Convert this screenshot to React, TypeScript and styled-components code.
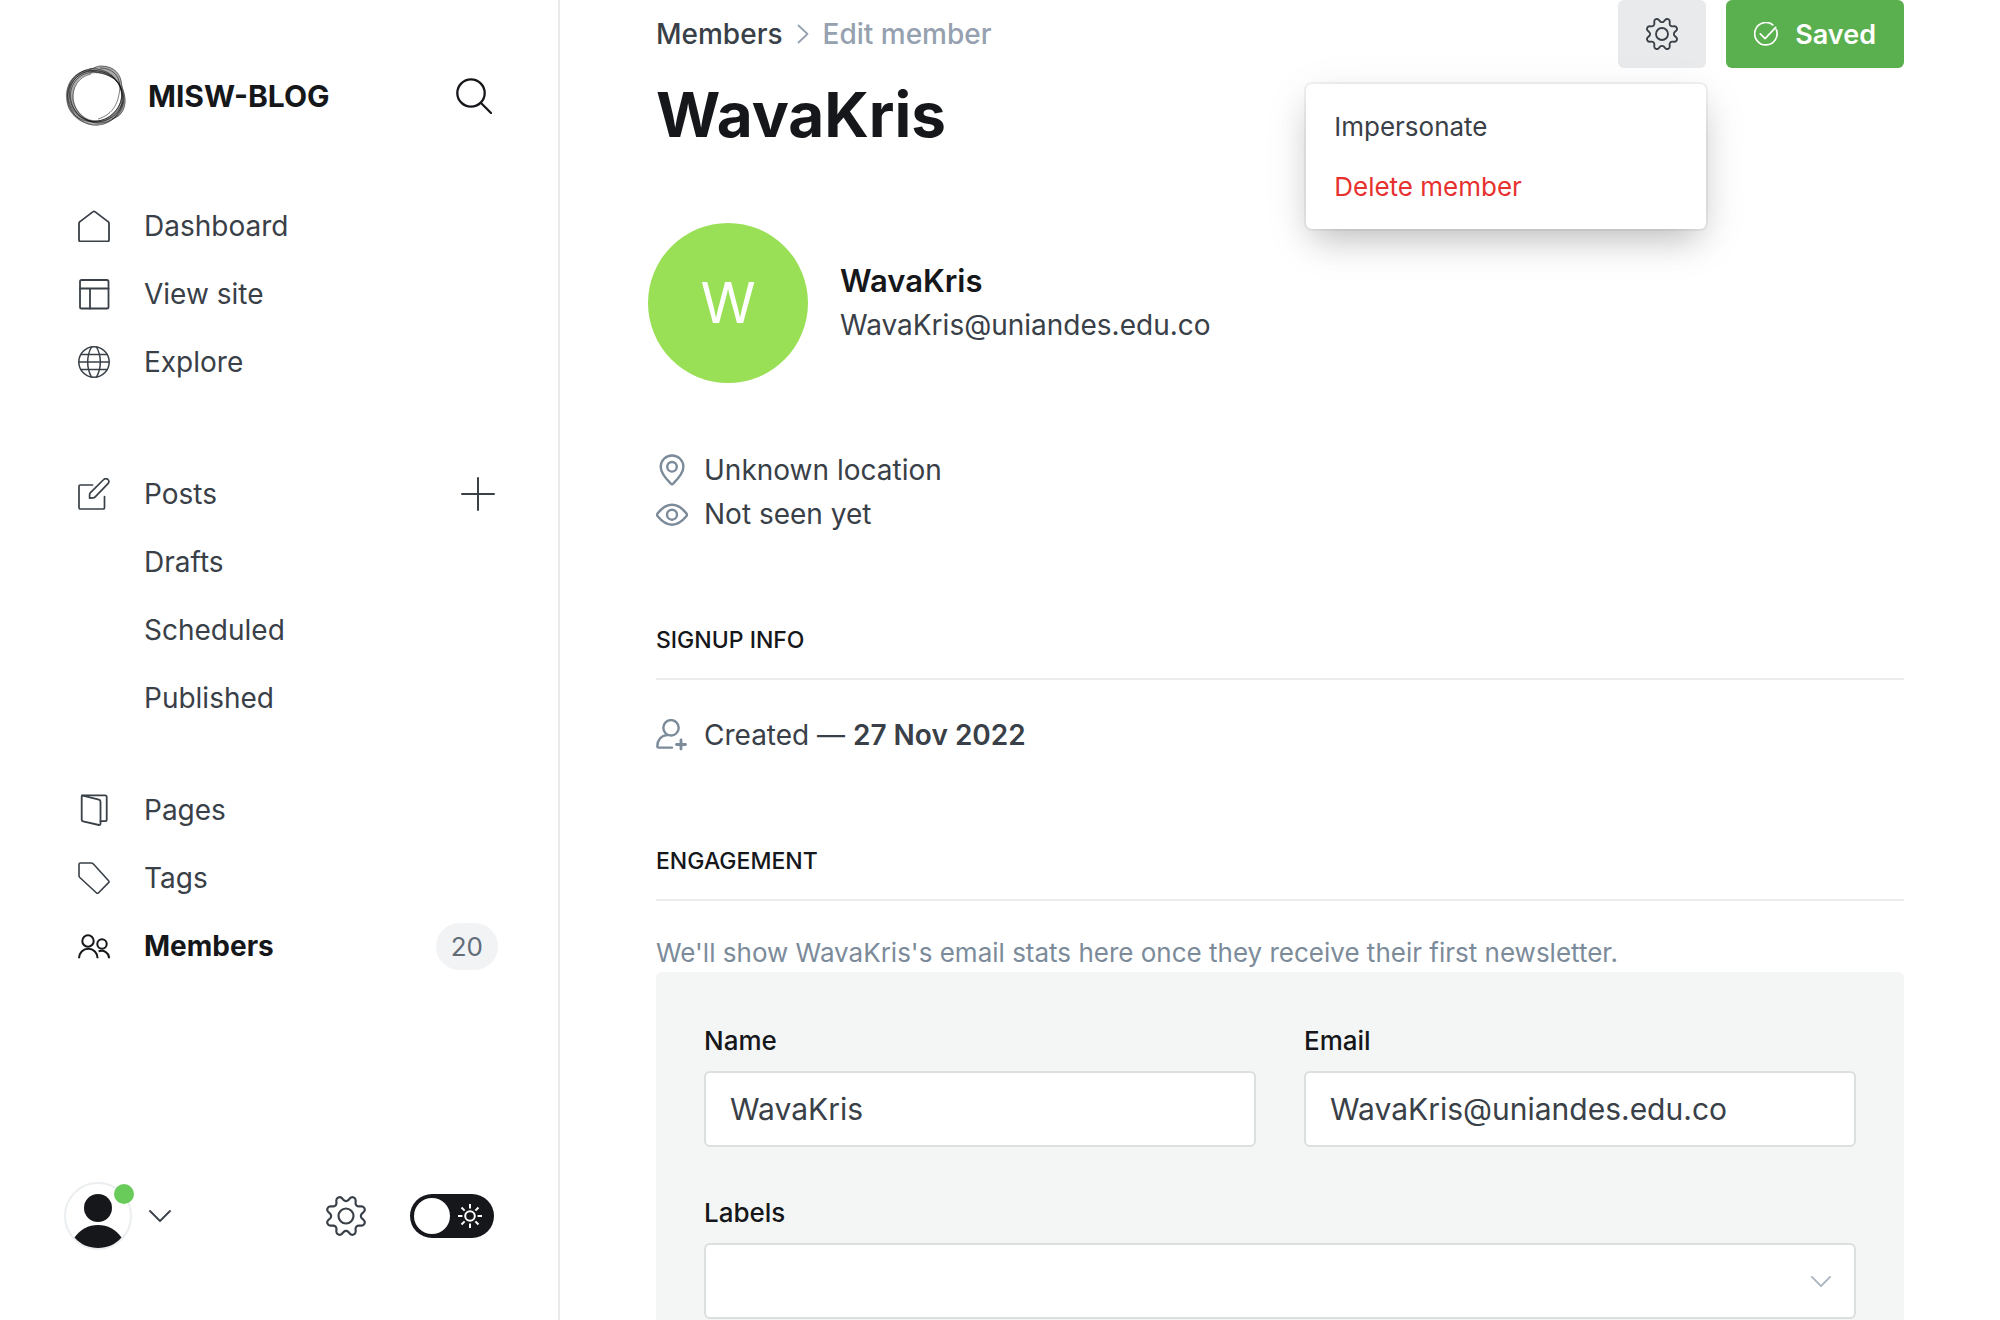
import React from 'react';
import styled, { createGlobalStyle } from 'styled-components';

const color = {
  ink: '#15171a',
  text: '#394047',
  muted: '#7c8b9a',
  faint: '#95a1af',
  line: '#ebecec',
  green: '#5aaf4e',
  red: '#e6312f',
};

const GlobalStyle = createGlobalStyle`
  *, *::before, *::after { box-sizing: border-box; }
  body {
    margin: 0;
    background: #fff;
    color: ${color.text};
    font-family: Inter, "Liberation Sans", sans-serif;
    font-size: 28px;
    -webkit-font-smoothing: antialiased;
  }
  button, input, select { font: inherit; color: inherit; }
  svg { display: block; flex: none; }
`;

const Layout = styled.div`
  display: flex;
  height: 100vh;
`;

/* ---------- Sidebar ---------- */

const Sidebar = styled.nav`
  display: flex;
  flex-direction: column;
  flex: none;
  width: 560px;
  padding: 64px 60px 64px 64px;
  border-right: 2px solid #e8e9ea;
`;

const SiteHeader = styled.header`
  display: flex;
  align-items: center;
  gap: 20px;
  height: 64px;
  margin-bottom: 64px;
  padding-right: 6px;
`;

const SiteName = styled.span`
  flex: 1;
  color: ${color.ink};
  font-size: 30px;
  font-weight: 700;
`;

const IconButton = styled.button`
  display: flex;
  align-items: center;
  justify-content: center;
  padding: 0;
  border: 0;
  background: none;
  color: ${(p) => p.color || color.text};
  cursor: pointer;
`;

const NavGroup = styled.ul<{ $space?: number }>`
  margin: 0 0 ${(p) => p.$space || 0}px;
  padding: 0;
  list-style: none;
`;

const NavItem = styled.li`
  display: flex;
  align-items: center;
  justify-content: space-between;
  height: 68px;
`;

const NavLink = styled.a<{ $active?: boolean; $nested?: boolean }>`
  display: flex;
  align-items: center;
  gap: 34px;
  padding-left: ${(p) => (p.$nested ? 80 : 14)}px;
  color: ${(p) => (p.$active ? color.ink : color.text)};
  font-weight: ${(p) => (p.$active ? 700 : 400)};
  line-height: 36px;
  text-decoration: none;
`;

const AddButton = styled(IconButton)`
  margin-right: 3px;
`;

const Badge = styled.span`
  padding: 0 15px;
  border-radius: 24px;
  background: #f1f3f4;
  color: #626d79;
  font-size: 26px;
  line-height: 47px;
`;

const SidebarFooter = styled.footer`
  display: flex;
  align-items: center;
  justify-content: space-between;
  margin-top: auto;
  padding: 0 4px 6px 0;
`;

const FooterTools = styled.div`
  display: flex;
  align-items: center;
  gap: 44px;
`;

const UserButton = styled(IconButton)`
  gap: 17px;
`;

const UserAvatar = styled.span`
  position: relative;
  display: flex;
  width: 68px;
  height: 68px;
`;

const StatusDot = styled.span`
  position: absolute;
  top: 2px;
  right: -2px;
  width: 20px;
  height: 20px;
  border-radius: 50%;
  background: #69cc5a;
`;

const ThemeSwitch = styled.label`
  position: relative;
  display: flex;
  cursor: pointer;

  svg {
    position: absolute;
    top: 10px;
    right: 12px;
    color: #fff;
  }
`;

const SwitchInput = styled.input`
  appearance: none;
  display: flex;
  align-items: center;
  width: 84px;
  height: 44px;
  margin: 0;
  padding: 0 4px;
  border-radius: 22px;
  background: ${color.ink};
  cursor: pointer;

  &::before {
    content: '';
    width: 36px;
    height: 36px;
    border-radius: 50%;
    background: #fff;
  }
`;

/* ---------- Main ---------- */

const Main = styled.main`
  flex: 1;
  min-width: 0;
  padding: 0 96px 96px;
  overflow-y: auto;
  scrollbar-width: none;
`;

const TopBar = styled.div`
  display: flex;
  align-items: center;
  justify-content: space-between;
  height: 68px;
`;

const Breadcrumb = styled.div`
  display: flex;
  align-items: center;
  gap: 14px;
  color: ${color.faint};
  font-weight: 500;
  line-height: 36px;
`;

const BreadcrumbLink = styled.a`
  color: ${color.text};
  text-decoration: none;
`;

const Actions = styled.div`
  display: flex;
  gap: 20px;
`;

const MenuAnchor = styled.div`
  position: relative;
`;

const SettingsButton = styled(IconButton)`
  width: 88px;
  height: 68px;
  border-radius: 6px;
  background: #e9eaec;
`;

const SaveButton = styled.button`
  display: flex;
  align-items: center;
  gap: 17px;
  height: 68px;
  padding: 0 28px;
  border: 0;
  border-radius: 6px;
  background: ${color.green};
  color: #fff;
  font-size: 27px;
  font-weight: 600;
  cursor: pointer;
`;

const Menu = styled.ul`
  position: absolute;
  top: 84px;
  right: 0;
  z-index: 1;
  width: 400px;
  margin: 0;
  padding: 12px 0 13px;
  border-radius: 6px;
  background: #fff;
  box-shadow:
    0 0 0 2px rgba(0, 0, 0, 0.05),
    0 16px 32px -8px rgba(0, 0, 0, 0.2),
    0 12px 48px rgba(0, 0, 0, 0.09);
  list-style: none;
`;

const MenuItem = styled.button<{ $danger?: boolean }>`
  display: block;
  width: 100%;
  height: 60px;
  padding: 0 28px;
  border: 0;
  background: none;
  color: ${(p) => (p.$danger ? color.red : color.text)};
  font-size: 26px;
  text-align: left;
  cursor: pointer;
`;

const Title = styled.h1`
  margin: 11px 0 72px;
  color: ${color.ink};
  font-size: 62px;
  font-weight: 700;
  line-height: 72px;
`;

const Profile = styled.section`
  display: flex;
  align-items: center;
  gap: 32px;
  margin: 0 0 65px -8px;
`;

const Initial = styled.div`
  display: flex;
  align-items: center;
  justify-content: center;
  width: 160px;
  height: 160px;
  border-radius: 50%;
  background: #99e056;
  color: #fff;
  font-size: 56px;
`;

const ProfileName = styled.h3`
  margin: 0;
  color: ${color.ink};
  font-size: 31px;
  font-weight: 600;
  line-height: 44px;
`;

const ProfileEmail = styled.p`
  margin: 0;
  line-height: 44px;
`;

const Detail = styled.p`
  display: flex;
  align-items: center;
  gap: 16px;
  margin: 0;
  line-height: 44px;

  svg { color: ${color.muted}; }
  strong { font-weight: 600; }
`;

const SectionTitle = styled.h4`
  margin: 90px 0 33px;
  padding-bottom: 24px;
  border-bottom: 2px solid ${color.line};
  color: ${color.ink};
  font-size: 23px;
  font-weight: 500;
  line-height: 28px;
  text-transform: uppercase;
`;

const Hint = styled.p`
  margin: 0;
  color: ${color.muted};
  font-size: 26px;
  line-height: 38px;
`;

const Form = styled.form`
  display: grid;
  grid-template-columns: 1fr 1fr;
  gap: 45px 48px;
  padding: 48px;
  border-radius: 6px;
  background: #f4f6f5;
`;

const Field = styled.div<{ $wide?: boolean }>`
  display: flex;
  flex-direction: column;
  gap: 9px;
  grid-column: ${(p) => (p.$wide ? '1 / -1' : 'auto')};
`;

const FieldLabel = styled.label`
  color: ${color.ink};
  font-size: 26px;
  font-weight: 500;
  line-height: 42px;
`;

const TextInput = styled.input`
  width: 100%;
  height: 76px;
  padding: 0 24px;
  border: 2px solid #dcdfdf;
  border-radius: 6px;
  background: #fff;
  font-size: 30px;
`;

const SelectWrap = styled.div`
  position: relative;

  svg {
    position: absolute;
    top: 33px;
    right: 25px;
    color: #abb4be;
    pointer-events: none;
  }
`;

const Select = styled(TextInput).attrs({ as: 'select' })`
  display: block;
  appearance: none;
`;

/* ---------- Icons ---------- */

type IconProps = {
  size?: number;
  height?: number;
  box?: string;
  weight?: number;
  children: React.ReactNode;
};

const Icon = ({ size = 32, height, box = '0 0 32 32', weight = 1.8, children }: IconProps) => (
  <svg
    width={size}
    height={height || size}
    viewBox={box}
    fill="none"
    stroke="currentColor"
    strokeWidth={weight}
    strokeLinecap="round"
    strokeLinejoin="round"
    aria-hidden="true"
  >
    {children}
  </svg>
);

const HomeIcon = () => (
  <Icon>
    <path d="M1 13.6c0-.8.3-1.5 1-2L14.8 1.9a2 2 0 0 1 2.4 0L30 11.6c.7.5 1 1.2 1 2V30a1.4 1.4 0 0 1-1.4 1.4H2.4A1.4 1.4 0 0 1 1 30z" />
  </Icon>
);

const LayoutIcon = () => (
  <Icon>
    <rect x="2" y="2" width="28.5" height="28.5" rx="1.6" />
    <path d="M2 10.5h28.5M12 10.500v20" />
  </Icon>
);

const GlobeIcon = () => (
  <Icon weight={1.5}>
    <circle cx="16" cy="16" r="15.2" />
    <path d="M.8 16h30.4M2.8 8.6h26.4M2.8 23.4h26.4" />
    <path d="M13.5 1C8.400 10 8.400 22 13.500 31M18.500 1c5.100 9 5.100 21 0 30" />
  </Icon>
);

const EditIcon = () => (
  <Icon weight={1.7}>
    <path d="M14.5 7H2.300A1.300 1.300 0 0 0 1 8.300v21.400A1.300 1.300 0 0 0 2.300 31h22.900a1.300 1.300 0 0 0 1.300-1.300V18.500" />
    <path d="M11.600 20.200v-3.400c0-.9.3-1.600.9-2.200L25.700 1.500a2.900 2.900 0 0 1 4.300 0 2.900 2.900 0 0 1 0 4.200L17.200 18.900c-.6.7-1.300 1-2.200 1z" />
  </Icon>
);

const PagesIcon = () => (
  <Icon>
    <path d="M4 1.400h23.200A1.500 1.500 0 0 1 28.700 2.900v22.800a1.500 1.500 0 0 1-1.500 1.500h-4.600" />
    <path d="M5 1.600l15.900 4.100c1 .3 1.600 1 1.600 2v22c0 1-.7 1.600-1.600 1.300L5.100 27.400c-.9-.2-1.400-.8-1.400-1.700V2.600c0-.8.500-1.200 1.300-1z" />
  </Icon>
);

const TagIcon = () => (
  <Icon weight={1.6}>
    <path d="M1 2.400A1.400 1.400 0 0 1 2.400 1h10.800c.8 0 1.400.3 2 .8l15.400 17c.5.600.5 1.300 0 1.800L20.300 31c-.5.500-1.200.5-1.700 0L1.800 15.500C1.300 15 1 14.400 1 13.700z" />
  </Icon>
);

const MembersIcon = () => (
  <Icon weight={2}>
    <circle cx="10" cy="11" r="5.7" />
    <path d="M1 28.200c0-5.300 4.100-9.500 9.300-9.500s9.300 4.200 9.300 9.500" strokeLinecap="butt" />
    <circle cx="24" cy="14" r="4.7" />
    <path d="M20.600 21.300c5.400-1.700 10.400 1.500 10.500 6.900" strokeLinecap="butt" />
  </Icon>
);

const SearchIcon = () => (
  <Icon size={36} box="0 0 36 36" weight={2.3}>
    <circle cx="15" cy="15" r="13.7" />
    <path d="M25 25l10 10" />
  </Icon>
);

const PlusIcon = () => (
  <Icon size={34} box="0 0 34 34" weight={2}>
    <path d="M17 1v32M1 17h32" />
  </Icon>
);

type ChevronProps = { direction?: 'down' | 'right'; weight?: number; size?: number };

const ChevronIcon = ({ direction = 'down', weight = 1.8, size = 22 }: ChevronProps) =>
  direction === 'down' ? (
    <Icon size={size} height={size / 2 + 1} box="0 0 22 12" weight={weight}>
      <path d="M1 1l10 10L21 1" />
    </Icon>
  ) : (
    <Icon size={12} height={20} box="0 0 12 20" weight={weight}>
      <path d="M1.500 1.500L10.500 10l-9 8.500" />
    </Icon>
  );

const GearIcon = ({ size = 40, weight = 1.3 }: { size?: number; weight?: number }) => (
  <Icon size={size} box="0 0 24 24" weight={weight}>
    <path d="M10.546 2.438a1.957 1.957 0 0 0 2.908 0L14.400 1.400a1.959 1.959 0 0 1 3.410 1.413l-.071 1.400a1.958 1.958 0 0 0 2.051 2.054l1.400-.071a1.959 1.959 0 0 1 1.410 3.410l-1.042.940a1.960 1.960 0 0 0 0 2.909l1.042.940a1.959 1.959 0 0 1-1.413 3.410l-1.400-.071a1.958 1.958 0 0 0-2.056 2.056l.071 1.400A1.959 1.959 0 0 1 14.400 22.600l-.941-1.041a1.959 1.959 0 0 0-2.908 0L9.606 22.600A1.959 1.959 0 0 1 6.200 21.192l.072-1.400a1.958 1.958 0 0 0-2.056-2.056l-1.400.071A1.958 1.958 0 0 1 1.400 14.400l1.041-.940a1.960 1.960 0 0 0 0-2.909L1.400 9.606A1.958 1.958 0 0 1 2.809 6.200l1.400.071a1.958 1.958 0 0 0 2.058-2.060L6.200 2.810A1.959 1.959 0 0 1 9.606 1.400z" />
    <circle cx="12" cy="12" r="4.5" />
  </Icon>
);

const SunIcon = () => (
  <Icon size={24} box="0 0 24 24" weight={2}>
    <circle cx="12" cy="12" r="4.8" />
    {[0, 45, 90, 135, 180, 225, 270, 315].map((angle) => (
      <path key={angle} d="M12 0v4.400" transform={`rotate(${angle} 12 12)`} strokeLinecap="butt" />
    ))}
  </Icon>
);

const CheckIcon = () => (
  <Icon size={24} box="0 0 24 24" weight={1.7}>
    <path d="M18.800 2.900A11.200 11.200 0 1 0 22.300 7.600" />
    <path d="M6.300 11.800l4.800 4.800L21.700 5.300" />
  </Icon>
);

const PinIcon = () => (
  <Icon weight={2.4}>
    <path d="M27.400 12.800c0 5.900-7.300 14-10.200 16.900a1.700 1.700 0 0 1-2.400 0C11.900 26.800 4.700 18.700 4.700 12.800a11.350 11.350 0 0 1 22.700 0z" />
    <circle cx="16" cy="12.8" r="4.8" />
  </Icon>
);

const EyeIcon = () => (
  <Icon weight={2.4}>
    <path d="M30.300 15.200a2.400 2.400 0 0 1 0 3.100C27.700 21.500 22.300 26.700 16 26.700S4.300 21.500 1.700 18.300a2.400 2.400 0 0 1 0-3.100C4.300 12 9.700 6.800 16 6.800s11.700 5.200 14.300 8.400z" />
    <circle cx="16" cy="16.7" r="5" />
  </Icon>
);

const PersonAddIcon = () => (
  <Icon weight={2.4}>
    <circle cx="15" cy="8.8" r="7.7" />
    <path d="M16 28.600H2.600a1.200 1.200 0 0 1-1.300-1.300c0-5.800 3.700-11 10-11.200" />
    <path d="M25 21v9M20.500 25.500h9" strokeWidth="2.8" />
  </Icon>
);

const SiteLogo = () => (
  <svg width="64" height="64" viewBox="0 0 64 64" fill="none" aria-hidden="true">
    <path
      fillRule="evenodd"
      fill="#222"
      fillOpacity="0.38"
      d="M37 2c10-1 19 6 20.500 16 .6 5 4.500 12 3.800 20-.8 10-6 15-12 16.500-5 4-11 6.500-18 6.500C16 61 3 50 2 34 1 19 11 7 25 5c4-1 7-2.800 12-3zM36 9.500C20 8 9.500 17 9.500 32c0 13 10.500 24.500 23.500 24.500 12 0 24-12 24-24.500 0-10-4-14-7-17-4-2-8-5-14-5.500z"
    />
    <g stroke="#111" strokeWidth="0.9" strokeOpacity="0.6">
      <path d="M24 6C36 10 50 9 57 24c3 10-1 20-11 28C32 62 12 58 5 44-1 26 6 10 24 6z" />
      <path d="M25 5c6 0 6-3 12-3 14 0 20 9 20.500 18 .5 6 4 10 3.500 19-1 9-6 14-13 16" />
      <path d="M30 8C14 9 6 20 6.500 33 8 50 22 58 33 58c12-1 20-8 25-18 3-7-1-12-2-18C52 14 42 8 30 8z" />
      <path d="M27 10C14 13 8 24 9 36c2 12 12 22 24 22 12 0 24-9 26-20" />
      <path d="M22 8c10-3 24 0 32 10 5 8 5 17 0 26-6 9-14 13-23 13C16 57 5 46 4 32 4 20 12 11 22 8z" />
      <path d="M36 4c12 0 19 7 20 18-1 16-6 28-22 33" />
      <ellipse cx="31" cy="33" rx="28.500" ry="27" transform="rotate(60 31 33)" />
      <ellipse cx="32.5" cy="33" rx="28" ry="25.500" transform="rotate(35 33 33)" />
    </g>
  </svg>
);

const PersonPicture = () => (
  <svg width="68" height="68" viewBox="0 0 68 68" aria-hidden="true">
    <circle cx="34" cy="34" r="33" fill="#fff" stroke="#ebeef0" strokeWidth="2" />
    <circle cx="34" cy="26" r="14" fill={color.ink} />
    <path d="M10.500 55.500C16 47.500 24.500 43 34 43s18 4.500 23.500 12.500C51.500 62.500 43 66 34 66s-17.500-3.500-23.500-10.500z" fill={color.ink} />
  </svg>
);

/* ---------- Page ---------- */

export default function App() {
  return (
    <Layout>
      <GlobalStyle />
      <Sidebar aria-label="Main">
        <SiteHeader>
          <SiteLogo />
          <SiteName>MISW-BLOG</SiteName>
          <IconButton type="button" aria-label="Search" color={color.ink}>
            <SearchIcon />
          </IconButton>
        </SiteHeader>

        <NavGroup $space={64}>
          <NavItem><NavLink href="#dashboard"><HomeIcon />Dashboard</NavLink></NavItem>
          <NavItem><NavLink href="#site"><LayoutIcon />View site</NavLink></NavItem>
          <NavItem><NavLink href="#explore"><GlobeIcon />Explore</NavLink></NavItem>
        </NavGroup>

        <NavGroup $space={44}>
          <NavItem>
            <NavLink href="#posts"><EditIcon />Posts</NavLink>
            <AddButton type="button" aria-label="New post"><PlusIcon /></AddButton>
          </NavItem>
          <NavItem><NavLink href="#drafts" $nested>Drafts</NavLink></NavItem>
          <NavItem><NavLink href="#scheduled" $nested>Scheduled</NavLink></NavItem>
          <NavItem><NavLink href="#published" $nested>Published</NavLink></NavItem>
        </NavGroup>

        <NavGroup>
          <NavItem><NavLink href="#pages"><PagesIcon />Pages</NavLink></NavItem>
          <NavItem><NavLink href="#tags"><TagIcon />Tags</NavLink></NavItem>
          <NavItem>
            <NavLink href="#members" $active><MembersIcon />Members</NavLink>
            <Badge>20</Badge>
          </NavItem>
        </NavGroup>

        <SidebarFooter>
          <UserButton type="button" aria-label="Account menu">
            <UserAvatar>
              <PersonPicture />
              <StatusDot />
            </UserAvatar>
            <ChevronIcon />
          </UserButton>
          <FooterTools>
            <IconButton type="button" aria-label="Settings"><GearIcon /></IconButton>
            <ThemeSwitch>
              <SwitchInput type="checkbox" aria-label="Night mode" />
              <SunIcon />
            </ThemeSwitch>
          </FooterTools>
        </SidebarFooter>
      </Sidebar>

      <Main>
        <TopBar>
          <Breadcrumb>
            <BreadcrumbLink href="#members">Members</BreadcrumbLink>
            <ChevronIcon direction="right" />
            <span>Edit member</span>
          </Breadcrumb>
          <Actions>
            <MenuAnchor>
              <SettingsButton type="button" aria-label="Member actions" aria-expanded="true">
                <GearIcon size={32} weight={1.4} />
              </SettingsButton>
              <Menu>
                <li><MenuItem type="button">Impersonate</MenuItem></li>
                <li><MenuItem type="button" $danger>Delete member</MenuItem></li>
              </Menu>
            </MenuAnchor>
            <SaveButton type="button"><CheckIcon />Saved</SaveButton>
          </Actions>
        </TopBar>

        <Title>WavaKris</Title>

        <Profile>
          <Initial>W</Initial>
          <div>
            <ProfileName>WavaKris</ProfileName>
            <ProfileEmail>WavaKris@uniandes.edu.co</ProfileEmail>
          </div>
        </Profile>

        <Detail><PinIcon />Unknown location</Detail>
        <Detail><EyeIcon />Not seen yet</Detail>

        <SectionTitle>Signup info</SectionTitle>
        <Detail>
          <PersonAddIcon />
          <span>Created — <strong>27 Nov 2022</strong></span>
        </Detail>

        <SectionTitle>Engagement</SectionTitle>
        <Hint>We'll show WavaKris's email stats here once they receive their first newsletter.</Hint>

        <Form>
          <Field>
            <FieldLabel htmlFor="member-name">Name</FieldLabel>
            <TextInput id="member-name" type="text" defaultValue="WavaKris" />
          </Field>
          <Field>
            <FieldLabel htmlFor="member-email">Email</FieldLabel>
            <TextInput id="member-email" type="email" defaultValue="WavaKris@uniandes.edu.co" />
          </Field>
          <Field $wide>
            <FieldLabel htmlFor="member-labels">Labels</FieldLabel>
            <SelectWrap>
              <Select id="member-labels" />
              <ChevronIcon size={20} weight={2} />
            </SelectWrap>
          </Field>
        </Form>
      </Main>
    </Layout>
  );
}
